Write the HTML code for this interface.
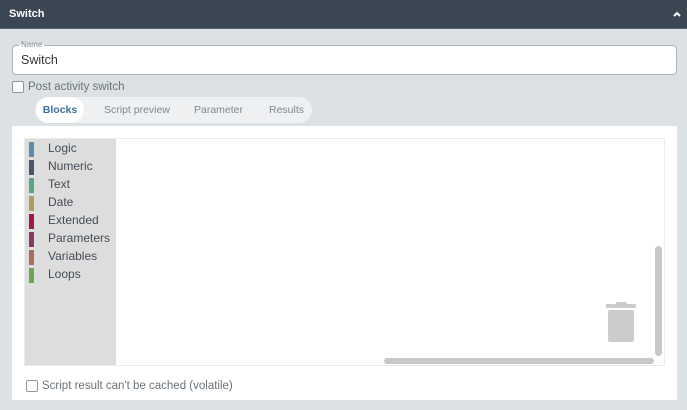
<!DOCTYPE html>
<html><head><style>
*{box-sizing:border-box;margin:0;padding:0}
body{width:687px;height:410px;background:#dce1e4;font-family:"Liberation Sans",sans-serif;position:relative;overflow:hidden}
.hdr{position:absolute;left:0;top:0;width:687px;height:29px;background:#3a4652;border-bottom:1px solid #56626d}
.hdr span{position:absolute;left:9px;top:8px;color:#fff;font-weight:bold;font-size:11px}
.inp{position:absolute;left:12px;top:45px;width:665px;height:30px;background:#fff;border:1px solid #a9b3bd;border-radius:4px}
.lbl{position:absolute;left:19px;top:40px;font-size:8px;color:#8a929a;background:linear-gradient(#dce1e4 50%,#fff 50%);padding:0 2px}
.inp span{position:absolute;left:8px;top:7px;font-size:12.5px;color:#333}
.cb{position:absolute;width:12px;height:12px;border:1px solid #8f979e;border-radius:2px;background:#fff}
.t{position:absolute;font-size:11.5px;color:#6b737a}
.tabs{position:absolute;left:35px;top:97px;width:277px;height:26px;background:#eef0f1;border-radius:13px}
.tab{position:absolute;top:0;height:26px;line-height:26px;font-size:10.5px;color:#808890}
.act{left:1px;width:48px;background:#fff;border-radius:13px;text-align:center;color:#3d6f9e;font-weight:bold}
.panel{position:absolute;left:12px;top:126px;width:665px;height:274px;background:#fff}
.ws{position:absolute;left:24px;top:138px;width:641px;height:228px;border:1px solid #ececec;background:#fff}
.tb{position:absolute;left:25px;top:139px;width:91px;height:226px;background:#dddddd}
.it{position:absolute;left:4px;height:16px;width:90px}
.it i{position:absolute;left:0;top:1px;width:5px;height:15px}
.it b{position:absolute;left:19px;top:0px;font-weight:normal;font-size:12px;color:#444c55}
</style></head><body>
<div class="hdr"><span>Switch</span>
<svg style="position:absolute;left:673px;top:11px" width="8" height="6"><path d="M1 5L4 2L7 5" stroke="#fff" stroke-width="2" fill="none"/></svg></div>
<div class="inp"><span>Switch</span></div>
<div class="lbl">Name</div>
<div class="cb" style="left:12px;top:81px"></div>
<div class="t" style="left:28px;top:81px">Post activity switch</div>
<div class="tabs">
<div class="tab act">Blocks</div>
<div class="tab" style="left:69px">Script preview</div>
<div class="tab" style="left:159px">Parameter</div>
<div class="tab" style="left:234px">Results</div>
</div>
<div class="panel"></div>
<div class="ws"></div>
<div class="tb">
<div class="it" style="top:2px"><i style="background:#5b8bad"></i><b>Logic</b></div>
<div class="it" style="top:20px"><i style="background:#4a5766"></i><b>Numeric</b></div>
<div class="it" style="top:38px"><i style="background:#5ba57e"></i><b>Text</b></div>
<div class="it" style="top:56px"><i style="background:#a8a05c"></i><b>Date</b></div>
<div class="it" style="top:74px"><i style="background:#a51a3c"></i><b>Extended</b></div>
<div class="it" style="top:92px"><i style="background:#8b3a66"></i><b>Parameters</b></div>
<div class="it" style="top:110px"><i style="background:#a8705a"></i><b>Variables</b></div>
<div class="it" style="top:128px"><i style="background:#6aa655"></i><b>Loops</b></div>
</div>
<svg style="position:absolute;left:606px;top:302px" width="32" height="42"><rect x="10" y="0" width="11" height="3" rx="1.5" fill="#ccc"/><rect x="0" y="2" width="30" height="4" fill="#ccc"/><rect x="2" y="8" width="26" height="32" rx="2" fill="#ccc"/></svg>
<div style="position:absolute;left:655px;top:246px;width:7px;height:110px;background:#c8c8c8;border-radius:4px"></div>
<div style="position:absolute;left:384px;top:358px;width:270px;height:6px;background:#c8c8c8;border-radius:3px"></div>
<div class="cb" style="left:26px;top:380px"></div>
<div class="t" style="left:42px;top:380px">Script result can't be cached (volatile)</div>
</body></html>
